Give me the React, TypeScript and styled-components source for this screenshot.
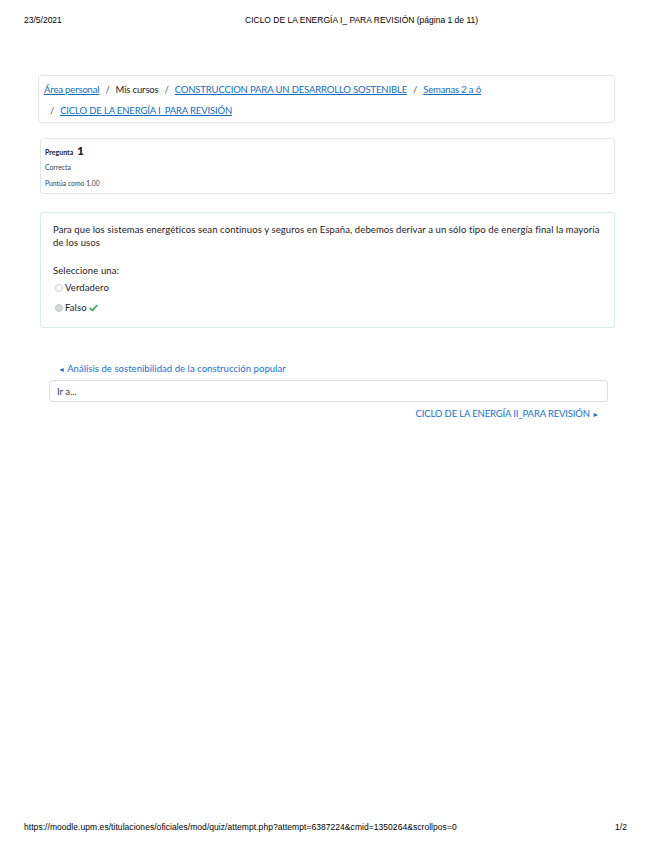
import React from "react";
import styled, { createGlobalStyle } from "styled-components";

const Global = createGlobalStyle`
  html, body { margin: 0; padding: 0; background: #fff; }
  body { font-family: Lato, "Liberation Sans", sans-serif; color: #1d2125; }
`;

const Page = styled.div`
  width: 655px;
  height: 848px;
  display: flex;
  flex-direction: column;
  box-sizing: border-box;
`;

const PrintHeader = styled.header`
  display: grid;
  grid-template-columns: 221px auto;
  padding: 15px 0 0 24px;
  font-family: "Liberation Sans", Arial, sans-serif;
  font-size: 8.5px;
  line-height: 10px;
  color: #000;
`;

const Main = styled.main`
  flex: 1;
  display: flex;
  flex-direction: column;
  padding: 0 40px 0 38px;
`;

const Card = styled.div<{ $tint?: boolean; $inset?: number }>`
  border: 1px solid ${(p) => (p.$tint ? "#d5ecf1" : "#e3e5e7")};
  border-radius: 3px;
  background: #fff;
  margin-left: ${(p) => p.$inset ?? 0}px;
  box-sizing: border-box;
`;

const Breadcrumb = styled(Card)`
  margin-top: 50px;
  height: 48px;
  padding: 3px 0 0 5px;
  font-size: 9.5px;
  line-height: 21px;
  letter-spacing: -0.15px;
`;

const Crumb = styled.a`
  color: #0f6cbf;
  text-decoration: underline;
`;

const Plain = styled.span`
  color: #1d2125;
`;

const Sep = styled.span`
  color: #4a4f55;
  margin: 0 6px;
`;

const Info = styled(Card)`
  margin-top: 15px;
  height: 56px;
  padding: 4px 0 0 4px;
  font-size: 6.8px;
  color: #3b3f44;
`;

const InfoRow = styled.div`
  height: 16px;
  line-height: 16px;
`;

const QNum = styled.span`
  font-weight: 700;
  font-size: 7px;
  color: #1d2125;
  b {
    font-size: 12px;
    margin-left: 2px;
    line-height: 16px;
  }
`;

const Formulation = styled(Card)`
  margin-top: 18px;
  height: 116px;
  padding: 10px 12px 0 12px;
  font-size: 9.5px;
  letter-spacing: 0.1px;
`;

const QText = styled.p`
  margin: 0;
  line-height: 13px;
`;

const Prompt = styled.div`
  margin-top: 15px;
  line-height: 13px;
`;

const Options = styled.div`
  display: flex;
  flex-direction: column;
  gap: 7px;
  margin-top: 4px;
  padding-left: 2px;
`;

const Option = styled.label`
  display: flex;
  align-items: center;
  gap: 2px;
  line-height: 13px;
`;

const Radio = styled.span<{ $checked?: boolean }>`
  width: 6px;
  height: 6px;
  border-radius: 50%;
  border: 1px solid #c8cbce;
  background: ${(p) => (p.$checked ? "#d3d5d8" : "#fff")};
`;

const Nav = styled.div`
  margin-top: 34px;
  display: flex;
  flex-direction: column;
  padding: 0 7px 0 11px;
  font-size: 9.5px;
`;

const NavLink = styled.a<{ $right?: boolean }>`
  color: #1570d6;
  text-decoration: none;
  line-height: 13px;
  letter-spacing: ${(p) => (p.$right ? "-0.15px" : "0.05px")};
  padding-left: ${(p) => (p.$right ? 0 : 9)}px;
  align-self: ${(p) => (p.$right ? "flex-end" : "flex-start")};
  padding-right: ${(p) => (p.$right ? 9 : 0)}px;
`;

const Arrow = styled.span`
  font-size: 7px;
`;

const Select = styled.div`
  margin: 4px 0 5px 0;
  height: 22px;
  border: 1px solid #dcdee1;
  border-radius: 3px;
  box-sizing: border-box;
  display: flex;
  align-items: center;
  padding-left: 7px;
  color: #343a40;
`;

const PrintFooter = styled.footer`
  display: flex;
  justify-content: space-between;
  padding: 0 28px 16px 24px;
  font-family: "Liberation Sans", Arial, sans-serif;
  font-size: 8.5px;
  line-height: 10px;
  letter-spacing: 0.05px;
  color: #000;
`;

const Check = () => (
  <svg width="9" height="8" viewBox="0 0 9 8" aria-hidden>
    <path d="M1.2 4.3 L3.4 6.4 L7.8 1.6" fill="none" stroke="#3aa655" strokeWidth="1.6" strokeLinecap="round" strokeLinejoin="round" />
  </svg>
);

export default function App() {
  return (
    <>
      <Global />
      <Page>
        <PrintHeader>
          <span>23/5/2021</span>
          <span>CICLO DE LA ENERGÍA I_ PARA REVISIÓN (página 1 de 11)</span>
        </PrintHeader>
        <Main>
          <Breadcrumb>
            <div>
              <Crumb>Área personal</Crumb>
              <Sep>/</Sep>
              <Plain>Mis cursos</Plain>
              <Sep>/</Sep>
              <Crumb>CONSTRUCCION PARA UN DESARROLLO SOSTENIBLE</Crumb>
              <Sep>/</Sep>
              <Crumb>Semanas 2 a 6</Crumb>
            </div>
            <div>
              <Sep>/</Sep>
              <Crumb>CICLO DE LA ENERGÍA I_PARA REVISIÓN</Crumb>
            </div>
          </Breadcrumb>
          <Info $inset={2}>
            <InfoRow>
              <QNum>
                Pregunta <b>1</b>
              </QNum>
            </InfoRow>
            <InfoRow>Correcta</InfoRow>
            <InfoRow>Puntúa como 1.00</InfoRow>
          </Info>
          <Formulation $tint $inset={2}>
            <QText>
              Para que los sistemas energéticos sean continuos y seguros en España, debemos derivar a un sólo tipo de energía final la mayoría de los usos
            </QText>
            <Prompt>Seleccione una:</Prompt>
            <Options>
              <Option>
                <Radio />
                Verdadero
              </Option>
              <Option>
                <Radio $checked />
                Falso <Check />
              </Option>
            </Options>
          </Formulation>
          <Nav>
            <NavLink><Arrow>◄</Arrow> Análisis de sostenibilidad de la construcción popular</NavLink>
            <Select>Ir a...</Select>
            <NavLink $right>CICLO DE LA ENERGÍA II_PARA REVISIÓN <Arrow>►</Arrow></NavLink>
          </Nav>
        </Main>
        <PrintFooter>
          <span>https://moodle.upm.es/titulaciones/oficiales/mod/quiz/attempt.php?attempt=6387224&cmid=1350264&scrollpos=0</span>
          <span>1/2</span>
        </PrintFooter>
      </Page>
    </>
  );
}
